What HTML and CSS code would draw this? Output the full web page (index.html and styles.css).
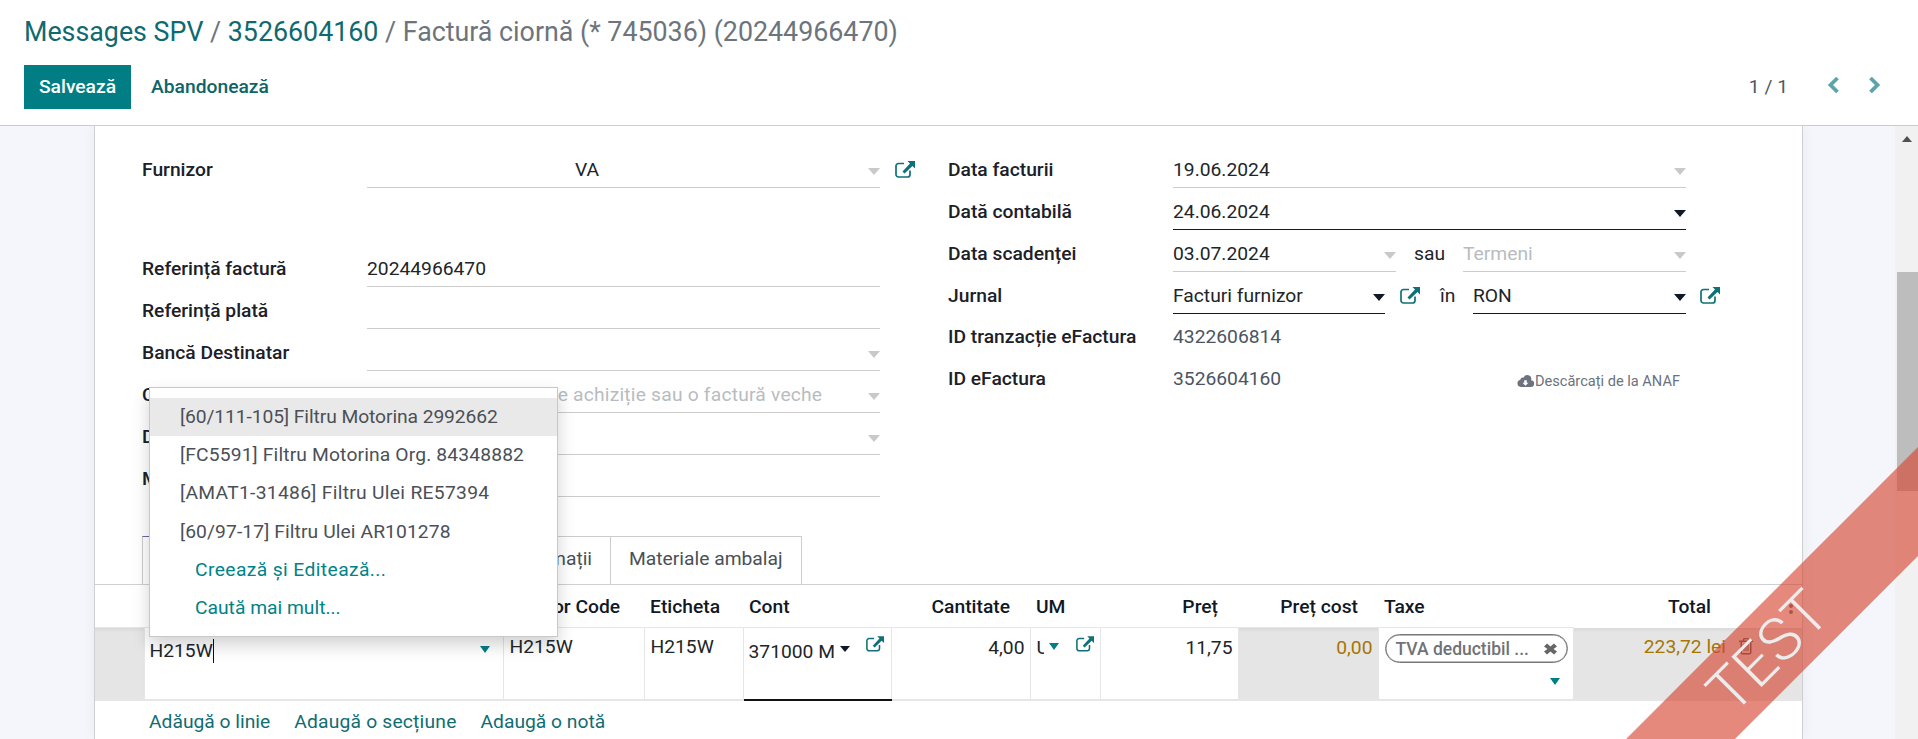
FILE: index.html
```html
<!DOCTYPE html>
<html lang="ro">
<head>
<meta charset="utf-8">
<title>Factură ciornă</title>
<link rel="stylesheet" href="styles.css">
</head>
<body>
<svg class="defs" width="0" height="0">
  <symbol id="ext" viewBox="0 0 20 17"><path d="M15 9.500V13.500A2.500 2.500 0 0 1 12.500 16H3.500A2.500 2.500 0 0 1 1 13.500V5A2.500 2.500 0 0 1 3.500 2.500H9" fill="none" stroke="currentColor" stroke-width="1.700"/><path d="M12.500 0H20V7.500L17.500 5 9.500 12.500 7.500 10.500 15 2.500Z" fill="currentColor"/></symbol>
</svg>
<header class="panel">
  <h1 class="crumbs"><a>Messages SPV</a> / <a>3526604160</a> / Factură ciornă (* 745036) (20244966470)</h1>
  <div class="actions">
    <button class="save">Salvează</button>
    <button class="discard">Abandonează</button>
    <div class="pager">
      <span class="count">1 / 1</span>
      <svg class="chev" viewBox="0 0 14 20"><path d="M10.500 3 3.500 10 10.500 17" /></svg>
      <svg class="chev next" viewBox="0 0 14 20"><path d="M3.500 3 10.500 10 3.500 17" /></svg>
    </div>
  </div>
</header>
<div class="main">
  <div class="viewport">
    <main class="sheet">
      <section class="form">
        <div class="col col-left">
          <div class="row"><label>Furnizor</label><div class="f wide center">VA<i class="caret off"></i></div><svg class="ext"><use href="#ext"/></svg></div>
          <div class="spacer"></div>
          <div class="row"><label>Referință factură</label><div class="f wide">20244966470</div></div>
          <div class="row"><label>Referință plată</label><div class="f wide"></div></div>
          <div class="row"><label>Bancă Destinatar</label><div class="f wide"><i class="caret off"></i></div></div>
          <div class="row"><label>Completare automată</label><div class="f wide ph">Selectați o comandă de achiziție sau o factură veche<i class="caret off"></i></div></div>
          <div class="row"><label>Data livrării</label><div class="f wide"><i class="caret off"></i></div></div>
          <div class="row"><label>Mesaj</label><div class="f wide"></div></div>
        </div>
        <div class="col col-right">
          <div class="row"><label>Data facturii</label><div class="f full">19.06.2024<i class="caret off"></i></div></div>
          <div class="row"><label>Dată contabilă</label><div class="f full dark">24.06.2024<i class="caret"></i></div></div>
          <div class="row"><label>Data scadenței</label><div class="f half">03.07.2024<i class="caret off"></i></div><span class="sau">sau</span><div class="f term ph">Termeni<i class="caret off"></i></div></div>
          <div class="row"><label>Jurnal</label><div class="f jur dark">Facturi furnizor<i class="caret"></i></div><svg class="ext"><use href="#ext"/></svg><span class="in">în</span><div class="f ron dark">RON<i class="caret"></i></div><svg class="ext"><use href="#ext"/></svg></div>
          <div class="row ro"><label>ID tranzacție eFactura</label><span class="val">4322606814</span></div>
          <div class="row ro"><label>ID eFactura</label><span class="val">3526604160</span>
            <a class="anaf"><svg viewBox="0 0 20 16"><path fill-rule="evenodd" d="M16.500 7A4.500 4.500 0 0 0 8 4 3 3 0 0 0 4 6.500 4.300 4.300 0 0 0 4.500 15H16A4 4 0 0 0 16.500 7ZM8.500 7H11.500V10H13.500L10 13.500 6.500 10H8.500Z"/></svg>Descărcați de la ANAF</a></div>
        </div>
      </section>
      <nav class="tabs">
        <span class="tab active">Linii factură</span>
        <span class="tab t2">Elemente jurnal</span>
        <span class="tab">Alte informații</span>
        <span class="tab">Materiale ambalaj</span>
      </nav>
      <table class="lines">
        <colgroup>
          <col class="c1"><col class="c2"><col class="c3"><col class="c4"><col class="c5"><col class="c6"><col class="c7"><col class="c8"><col class="c9"><col class="c10"><col class="c11">
        </colgroup>
        <thead>
          <tr>
            <th></th><th>Produs</th><th>Vendor Code</th><th>Eticheta</th><th>Cont</th><th class="r">Cantitate</th><th>UM</th><th class="r">Preț</th><th class="r">Preț cost</th><th>Taxe</th><th class="r total">Total<span class="kebab"></span></th>
          </tr>
        </thead>
        <tbody>
          <tr>
            <td class="grey"></td>
            <td class="edit"><span class="cursor">H215W</span><i class="caret teal"></i></td>
            <td class="plain">H215W</td>
            <td class="plain">H215W</td>
            <td class="cont"><span class="cv">371000 M</span><i class="caret"></i><svg class="ext"><use href="#ext"/></svg></td>
            <td class="num">4,00</td>
            <td class="um"><span class="clip">U</span><i class="caret teal"></i><svg class="ext"><use href="#ext"/></svg></td>
            <td class="num">11,75</td>
            <td class="num grey ocre">0,00</td>
            <td class="tax"><span class="tag"><span class="tagt">TVA deductibil ...</span><svg class="tagx" viewBox="0 0 13 12"><path d="M3 .5 6.500 3.500 10 .5 13 3.500 9.500 6 13 8.500 10 11.500 6.500 8.500 3 11.500 0 8.500 3.500 6 0 3.500Z"/></svg></span><i class="caret teal"></i></td>
            <td class="num grey ocre totalc">223,72 lei<svg class="trash" viewBox="0 0 14 18"><path fill-rule="evenodd" d="M4.500 1H9.500L10.500 3.500H14V5H12.500V15.500A2 2 0 0 1 10.500 17.500H3.500A2 2 0 0 1 1.500 15.500V5H0V3.500H3.500ZM5.500 2.300 5 3.500H9L8.500 2.300ZM3 5V15.500A.5.5 0 0 0 3.500 16H10.500A.5.5 0 0 0 11 15.500V5ZM4.500 7H5.500V14H4.500ZM6.500 7H7.500V14H6.500ZM8.500 7H9.500V14H8.500Z"/></svg></td>
          </tr>
        </tbody>
      </table>
      <div class="adds"><a>Adăugă o linie</a><a class="add2">Adaugă o secțiune</a><a>Adaugă o notă</a></div>
    </main>
  </div>
  <div class="scrollbar"><span class="up"></span><span class="thumb"></span></div>
</div>
<ul class="menu">
  <li class="hl">[60/111-105] Filtru Motorina 2992662</li>
  <li class="m2">[FC5591] Filtru Motorina Org. 84348882</li>
  <li class="m3">[AMAT1-31486] Filtru Ulei RE57394</li>
  <li class="m4">[60/97-17] Filtru Ulei AR101278</li>
  <li class="act a1">Creează și Editează...</li>
  <li class="act">Caută mai mult...</li>
</ul>
<div class="ribbon-clip"><div class="ribbon"><span>TEST</span></div></div>
</body>
</html>
```
FILE: styles.css
```css
* { box-sizing: border-box; }
html, body { margin: 0; height: 739px; overflow: hidden; }
body { font-family: Roboto, "Liberation Sans", sans-serif; font-size: 19.25px; color: #212529; background: #fff; display: flex; flex-direction: column; position: relative; }
.defs { position: absolute; }
.panel { height: 126px; flex: none; border-bottom: 1px solid #ccc; padding: 15px 24px 0; background: #fff; }
.crumbs { margin: 0; font-size: 26.8px; font-weight: 400; line-height: 34px; color: #6c757d; white-space: nowrap; }
.crumbs a { color: #0f6a70; }
.actions { display: flex; align-items: center; margin-top: 16px; height: 44px; }
.save { background: #017e84; color: #fff; border: 0; height: 44px; width: 107px; padding: 0 0 2px; font: 500 19.25px Roboto, sans-serif; }
.discard { background: none; border: 0; color: #0d6468; font: 500 19.25px Roboto, sans-serif; padding: 0 0 2px; margin-left: 20px; }
.pager { margin-left: auto; display: flex; align-items: center; color: #4c5863; padding: 0 13px 2px 0; }
.count { margin-right: 39px; }
.chev { width: 14px; height: 20px; fill: none; stroke: #5ba5aa; stroke-width: 3.8; margin-top: -3px; }
.next { margin-left: 26px; }
.main { flex: 1; display: flex; min-height: 0; }
.viewport { flex: 1; background: #f4f6fb; padding: 0 93px 0 94px; overflow: hidden; }
.sheet { background: #fff; border-left: 1px solid #cfcfd4; border-right: 1px solid #cfcfd4; height: 100%; width: 1709px; box-shadow: 0 0 14px rgba(40, 40, 70, .05); }
.scrollbar { width: 23px; flex: none; background: #f1f1f1; position: relative; display: flex; flex-direction: column; align-items: center; }
.up { margin-top: 10px; border-left: 5px solid transparent; border-right: 5px solid transparent; border-bottom: 6px solid #505050; }
.thumb { position: absolute; left: 2px; right: 0; top: 146px; height: 219px; background: #bdbdbd; }
.form { display: grid; grid-template-columns: 806px 738px; padding: 20px 0 0 47px; height: 371px; }
.col { display: flex; flex-direction: column; }
.row { display: flex; height: 42px; align-items: flex-end; flex: none; }
.spacer { height: 57px; }
label { width: 225px; flex: none; font-weight: 500; align-self: flex-start; line-height: 24px; margin-top: 12px; color: #1b2029; }
.f { height: 34px; border-bottom: 1px solid #ccc; line-height: 32px; position: relative; flex: none; white-space: nowrap; }
.f .caret { position: absolute; right: 0; top: 14px; }
.wide { width: 513px; }
.center { padding-left: 208px; }
.ph { color: #b8bcc0; }
.col-left .ph { overflow: hidden; letter-spacing: .2px; text-indent: -4.400px; }
.full { width: 513px; }
.dark { border-bottom-color: #111827; }
.half { width: 223px; }
.term { width: 223px; }
.sau { flex: none; width: 67px; padding-left: 18px; line-height: 32px; height: 34px; }
.jur { width: 212px; }
.ron { width: 213px; }
.in { flex: none; width: 33px; height: 34px; line-height: 32px; }
.ext { width: 20px; height: 17px; color: #0e7078; flex: none; margin: 0 0 10px 15px; }
.jur + .ext { margin-right: 20px; }
.ron + .ext { margin-left: 14px; }
.caret { display: inline-block; width: 0; height: 0; border-left: 6px solid transparent; border-right: 6px solid transparent; border-top: 7px solid #111827; flex: none; }
.caret.off { border-top-color: #c9c9c9; }
.caret.teal { border-top-color: #017e84; }
.ro { height: 42px; align-items: center; padding-top: 3px; }
.ro label { margin-top: 0; align-self: center; }
.val { color: #4b5563; }
.anaf { margin: 4px 6px 0 auto; font-size: 14.6px; color: #6b7280; display: flex; align-items: center; white-space: nowrap; }
.anaf svg { width: 17px; height: 14px; fill: #6b7280; margin-right: 1px; }
.tabs { display: flex; height: 48px; padding-top: 39px; box-sizing: content-box; margin-left: 47px; }
.tab { border: 1px solid #ccc; border-bottom: 0; padding: 0 18px; line-height: 44px; height: 48px; white-space: nowrap; margin-left: -1px; color: #495057; }
.tab:first-child { margin-left: 0; }
.tab.active { border-top-color: #71639e; width: 170px; }
.t2 { width: 142px; }
.lines { border-collapse: collapse; table-layout: fixed; width: 1707px; border-top: 1px solid #cfcfd4; }
.c1 { width: 49px; } .c2 { width: 359px; } .c3 { width: 141px; } .c4 { width: 99px; } .c5 { width: 148px; } .c6 { width: 139px; } .c7 { width: 70px; } .c8 { width: 138px; } .c9 { width: 140px; } .c10 { width: 195px; } .c11 { width: 229px; }
.lines th { height: 43px; font-weight: 500; text-align: left; padding: 0 6px; color: #111827; white-space: nowrap; }
.lines th.r { text-align: right; padding-right: 20px; }
.lines th.total { position: relative; padding-right: 91px; }
.kebab { position: absolute; right: 9px; top: 13px; width: 4px; height: 4px; background: #6b7280; border-radius: 50%; box-shadow: 0 6px 0 #6b7280, 0 12px 0 #6b7280; }
.lines td { height: 72px; vertical-align: top; border: 1px solid #e6e6e6; border-bottom: 2px solid #e6e6e6; padding: 0; position: relative; }
.lines tr td:first-child { border-left: 0; }
.grey { background: #e5e5e5; box-shadow: inset 0 4px 4px -3px rgba(0,0,0,.08); }
.edit { padding: 11px 5px 0 !important; line-height: 24px; }
.cursor { border-right: 1px solid #111; display: inline-block; line-height: 24px; }
.edit .caret { position: absolute; right: 13px; top: 18px; border-left-width: 5.500px; border-right-width: 5.500px; }
.plain { padding: 7px 6px 0 !important; line-height: 24px; }
.cont { padding: 12px 5px 0 !important; line-height: 24px; border-bottom: 2px solid #111 !important; white-space: nowrap; }
.cont .caret { position: absolute; left: 96px; top: 18px; border-left-width: 5.500px; border-right-width: 5.500px; border-top-width: 6px; }
.cont .ext, .um .ext { position: absolute; margin: 0; width: 18px; height: 16px; top: 8px; }
.cont .ext { left: 122px; }
.um .ext { left: 45px; }
.num { text-align: right; padding: 8px 5px 0 0 !important; line-height: 24px; }
.ocre { color: #a67600; }
.totalc { padding: 7px 76px 0 0 !important; border: 0 !important; border-bottom: 2px solid #e6e6e6 !important; }
.trash { position: absolute; right: 49px; top: 9px; width: 14px; height: 18px; fill: #555; }
.um { line-height: 24px; }
.clip { position: absolute; left: 6px; top: 8px; width: 7px; overflow: hidden; }
.um .caret { position: absolute; left: 18px; top: 15px; border-left-width: 5.500px; border-right-width: 5.500px; }
.tag { position: absolute; left: 6px; top: 6px; width: 183px; height: 29px; border: 1px solid #777; border-radius: 15px; box-shadow: inset 0 0 0 .5px #777; padding-left: 10px; display: flex; align-items: center; color: #6f7276; font-weight: 500; font-size: 17.5px; white-space: nowrap; }
.tagx { position: absolute; right: 10px; top: 8px; width: 13px; height: 12px; fill: #666; }
.tax .caret { position: absolute; right: 13px; top: 50px; border-left-width: 5.500px; border-right-width: 5.500px; }
.adds { display: flex; gap: 24px; padding: 9px 0 0 54px; line-height: 24px; }
.adds a { color: #0f6d74; }
.adds .add2 { letter-spacing: .2px; }
.menu { position: absolute; left: 149px; top: 387px; width: 409px; height: 250px; margin: 0; padding: 10px 0 0; list-style: none; background: #fff; border: 1px solid #c8c8c8; box-shadow: 0 8px 16px rgba(0,0,0,.18); color: #4b5057; }
.menu li { height: 38.200px; line-height: 38px; padding-left: 30px; white-space: nowrap; }
.menu .hl { background: #e9e9e9; letter-spacing: -.08px; }
.menu .m2 { letter-spacing: .15px; }
.menu .m3 { letter-spacing: .3px; }
.menu .m4 { letter-spacing: .1px; }
.menu .act { color: #018288; padding-left: 45px; }
.menu .a1 { letter-spacing: .4px; }
.ribbon-clip { position: absolute; inset: 0; overflow: hidden; pointer-events: none; }
.ribbon { position: absolute; left: 1468px; top: 613px; width: 600px; height: 77px; transform: rotate(-45deg); background: rgba(212, 68, 48, .63); display: flex; align-items: center; justify-content: center; overflow: hidden; }
.ribbon span { color: #ececec; font-size: 60px; line-height: 77px; font-weight: 300; }
```
